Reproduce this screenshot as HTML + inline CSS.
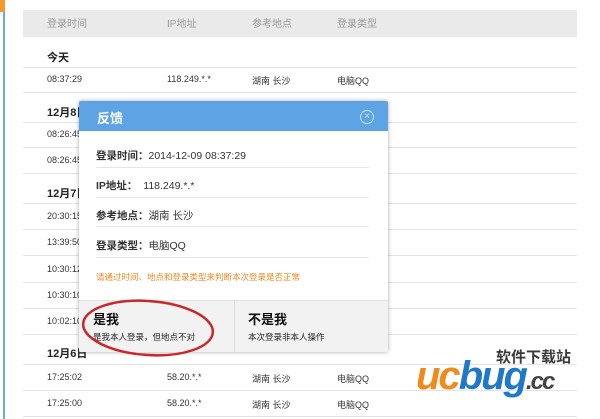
<!DOCTYPE html>
<html><head><meta charset="utf-8"><style>
body{margin:0;width:600px;height:419px;background:#fff;position:relative;overflow:hidden;font-family:"Liberation Sans","Noto Sans CJK SC",sans-serif;font-size:9px;color:#333}
.a{position:absolute;white-space:nowrap}
.ln{position:absolute;left:23px;width:554px;height:1px;background:#e4e4e4}
.g{font-weight:bold;font-size:11px;color:#222}
</style></head><body>
<div class="a" style="left:0;top:0;width:5px;height:12px;background:#f39a2b"></div>
<div class="a" style="left:3px;top:12px;width:2px;height:407px;background:#6aa8e4"></div>
<div class="a" style="left:23px;top:10px;width:554px;height:27px;background:#eaeaea"></div>
<div class="a" style="left:47px;top:15px;font-size:10px;color:#999">登录时间</div>
<div class="a" style="left:167px;top:15px;font-size:10px;color:#999">IP地址</div>
<div class="a" style="left:252px;top:15px;font-size:10px;color:#999">参考地点</div>
<div class="a" style="left:337px;top:15px;font-size:10px;color:#999">登录类型</div>
<div class="a g" style="left:47px;top:49px">今天</div><div class="ln" style="top:67px"></div>
<div class="a" style="left:47px;top:74px">08:37:29</div><div class="a" style="left:167px;top:74px">118.249.*.*</div><div class="a" style="left:252px;top:74px">湖南 长沙</div><div class="a" style="left:337px;top:74px">电脑QQ</div><div class="ln" style="top:92px"></div>
<div class="a g" style="left:47px;top:104px">12月8日</div><div class="ln" style="top:122px"></div>
<div class="a" style="left:47px;top:129px">08:26:45</div><div class="ln" style="top:147px"></div>
<div class="a" style="left:47px;top:155px">08:26:45</div><div class="ln" style="top:173px"></div>
<div class="a g" style="left:47px;top:185px">12月7日</div><div class="ln" style="top:203px"></div>
<div class="a" style="left:47px;top:211px">20:30:15</div><div class="ln" style="top:229px"></div>
<div class="a" style="left:47px;top:237px">13:39:50</div><div class="ln" style="top:255px"></div>
<div class="a" style="left:47px;top:264px">10:30:12</div><div class="ln" style="top:282px"></div>
<div class="a" style="left:47px;top:290px">10:30:10</div><div class="ln" style="top:308px"></div>
<div class="a" style="left:47px;top:316px">10:02:10</div><div class="ln" style="top:334px"></div>
<div class="a g" style="left:47px;top:345px">12月6日</div><div class="ln" style="top:364px"></div>
<div class="a" style="left:47px;top:372px">17:25:02</div><div class="a" style="left:167px;top:372px">58.20.*.*</div><div class="a" style="left:252px;top:372px">湖南 长沙</div><div class="a" style="left:337px;top:372px">电脑QQ</div><div class="ln" style="top:390px"></div>
<div class="a" style="left:47px;top:398px">17:25:00</div><div class="a" style="left:167px;top:398px">58.20.*.*</div><div class="a" style="left:252px;top:398px">湖南 长沙</div><div class="a" style="left:337px;top:398px">电脑QQ</div><div class="ln" style="top:416px"></div>

<div class="a" style="left:79px;top:101px;width:309px;height:251px;background:#fff;box-shadow:0 0 4px rgba(0,0,0,.35);border-radius:2px;overflow:hidden">
 <div style="position:absolute;left:0;top:0;width:309px;height:30px;background:#5ea3e3"></div>
 <div class="a" style="left:18px;top:7px;font-size:13px;font-weight:bold;color:#fff">反馈</div>
 <div class="a" style="left:281px;top:9px;width:12px;height:12px;border:1.5px solid #cfe2f7;border-radius:50%;color:#cfe2f7;font-size:10px;line-height:12px;text-align:center">×</div>
 <div class="a" style="left:17px;top:47px;font-size:10.5px"><b>登录时间：</b>2014-12-09 08:37:29</div>
 <div class="a" style="left:17px;top:66px;width:273px;height:1px;background:#e6e6e6"></div>
 <div class="a" style="left:17px;top:77px;font-size:10.5px"><b>IP地址：</b>&nbsp;&nbsp;118.249.*.*</div>
 <div class="a" style="left:17px;top:96px;width:273px;height:1px;background:#e6e6e6"></div>
 <div class="a" style="left:17px;top:107px;font-size:10.5px"><b>参考地点：</b>湖南 长沙</div>
 <div class="a" style="left:17px;top:125px;width:273px;height:1px;background:#e6e6e6"></div>
 <div class="a" style="left:17px;top:137px;font-size:10.5px"><b>登录类型：</b>电脑QQ</div>
 <div class="a" style="left:17px;top:156px;width:273px;height:1px;background:#e6e6e6"></div>
 <div class="a" style="left:17px;top:170px;font-size:8.5px;color:#f08a24">请通过时间、地点和登录类型来判断本次登录是否正常</div>
 <div class="a" style="left:0;top:199px;width:309px;height:52px;background:#f2f2f2;border-top:1px solid #e2e2e2"></div>
 <div class="a" style="left:155px;top:200px;width:1px;height:51px;background:#dcdcdc"></div>
 <div class="a" style="left:14px;top:208px;font-size:13px;font-weight:bold;color:#111">是我</div>
 <div class="a" style="left:14px;top:230px;font-size:8.5px;color:#222">是我本人登录，但地点不对</div>
 <div class="a" style="left:169px;top:208px;font-size:13px;font-weight:bold;color:#111">不是我</div>
 <div class="a" style="left:169px;top:230px;font-size:8.5px;color:#222">本次登录非本人操作</div>
</div>
<svg class="a" style="left:0;top:0" width="600" height="419"><ellipse cx="148" cy="328" rx="65" ry="27" fill="none" stroke="#c9272b" stroke-width="2.5" transform="rotate(4 148 328)"/></svg>
<div class="a" style="left:496px;top:346px;font-size:15px;font-weight:bold;color:#3a3a3a">软件下载站</div>
<div class="a" style="left:416px;top:354px;font-size:40px;font-weight:bold;font-style:italic;letter-spacing:-2px;font-family:'Liberation Sans',sans-serif"><span style="color:#f08a1c">uc</span><span style="color:#1f78c8">bug</span><span style="color:#444;font-size:24px">.cc</span></div>
</body></html>
